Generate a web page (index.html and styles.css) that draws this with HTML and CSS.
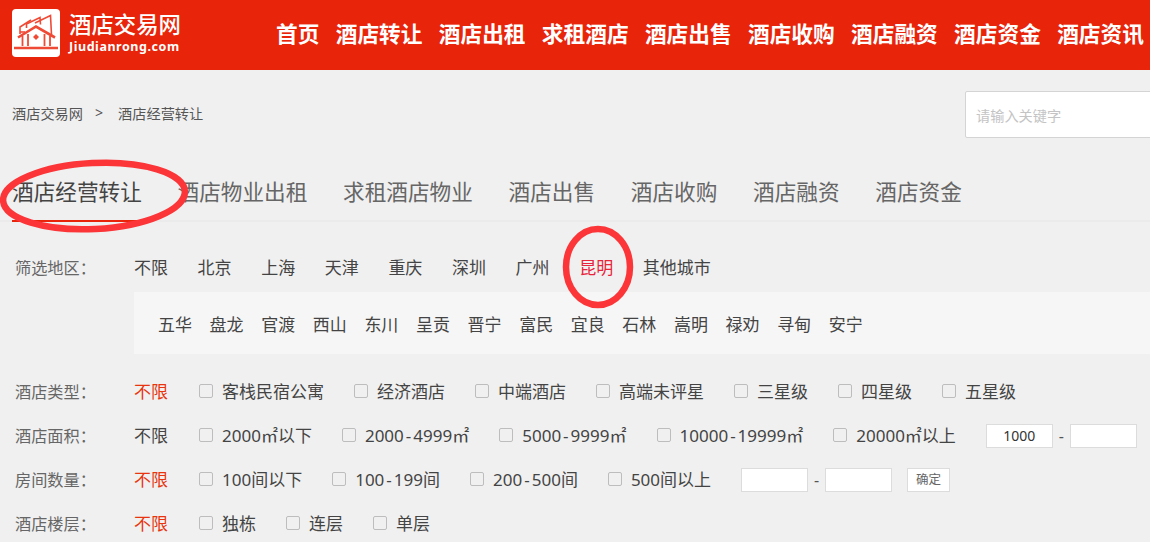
FILE: index.html
```html
<!DOCTYPE html>
<html lang="zh-CN">
<head>
<meta charset="utf-8">
<title>酒店交易网</title>
<link rel="stylesheet" href="styles.css">
</head>
<body>
<header class="topbar">
  <a class="logo">
    <svg class="logo-mark" viewBox="0 0 48 48" width="48" height="48">
      <rect width="48" height="48" rx="4" fill="#fff"/>
      <g fill="none" stroke="#ef4a35" stroke-width="1.6">
        <path d="M8 25 V18 L19 11"/>
        <path d="M14.5 19 V15 L28 8.5 L28.5 15.5"/>
        <path d="M23 14 L38.5 6.5 L39.5 26"/>
        <path d="M8 23 H13"/>
      </g>
      <path d="M6 28.5 L24 17.5 L43 28.5" fill="none" stroke="#ef4a35" stroke-width="2.6"/>
      <path d="M10.5 27 V37 M38 27 V37 M16 25 V37 M32.5 25 V37" stroke="#ef4a35" stroke-width="1.8"/>
      <path d="M21 28 L24 25 L27 28 L24 31 Z" fill="#ef4a35"/>
      <path d="M2 39 H46" stroke="#ef4a35" stroke-width="2.6"/>
    </svg>
    <span class="logo-text">
      <span class="logo-cn">酒店交易网</span>
      <span class="logo-en">Jiudianrong.com</span>
    </span>
  </a>
  <nav class="nav">
    <a>首页</a><a>酒店转让</a><a>酒店出租</a><a>求租酒店</a><a>酒店出售</a><a>酒店收购</a><a>酒店融资</a><a>酒店资金</a><a>酒店资讯</a>
  </nav>
</header>

<div class="crumbbar">
  <div class="crumbs"><span>酒店交易网</span><span class="sep">&gt;</span><span>酒店经营转让</span></div>
  <input class="search" type="text" placeholder="请输入关键字">
</div>

<div class="tabs">
  <a class="tab active">酒店经营转让</a><a class="tab">酒店物业出租</a><a class="tab">求租酒店物业</a><a class="tab">酒店出售</a><a class="tab">酒店收购</a><a class="tab">酒店融资</a><a class="tab">酒店资金</a>
</div>

<section class="filters">
  <div class="row">
    <span class="label">筛选地区：</span>
    <div class="cities">
      <a>不限</a><a>北京</a><a>上海</a><a>天津</a><a>重庆</a><a>深圳</a><a>广州</a><a class="on-city">昆明</a><a>其他城市</a>
    </div>
  </div>
  <div class="subpanel">
    <a>五华</a><a>盘龙</a><a>官渡</a><a>西山</a><a>东川</a><a>呈贡</a><a>晋宁</a><a>富民</a><a>宜良</a><a>石林</a><a>嵩明</a><a>禄劝</a><a>寻甸</a><a>安宁</a>
  </div>

  <div class="row">
    <span class="label">酒店类型：</span>
    <a class="any on">不限</a>
    <label class="opt"><i class="box"></i>客栈民宿公寓</label>
    <label class="opt"><i class="box"></i>经济酒店</label>
    <label class="opt"><i class="box"></i>中端酒店</label>
    <label class="opt"><i class="box"></i>高端未评星</label>
    <label class="opt"><i class="box"></i>三星级</label>
    <label class="opt"><i class="box"></i>四星级</label>
    <label class="opt"><i class="box"></i>五星级</label>
  </div>
  <div class="row">
    <span class="label">酒店面积：</span>
    <a class="any">不限</a>
    <label class="opt"><i class="box"></i>2000㎡以下</label>
    <label class="opt"><i class="box"></i>2000<span class="hy">-</span>4999㎡</label>
    <label class="opt"><i class="box"></i>5000<span class="hy">-</span>9999㎡</label>
    <label class="opt"><i class="box"></i>10000<span class="hy">-</span>19999㎡</label>
    <label class="opt"><i class="box"></i>20000㎡以上</label>
    <span class="range"><input class="num" type="text" value="1000"><span class="dash">-</span><input class="num" type="text"></span>
  </div>
  <div class="row">
    <span class="label">房间数量：</span>
    <a class="any on">不限</a>
    <label class="opt"><i class="box"></i>100间以下</label>
    <label class="opt"><i class="box"></i>100<span class="hy">-</span>199间</label>
    <label class="opt"><i class="box"></i>200<span class="hy">-</span>500间</label>
    <label class="opt"><i class="box"></i>500间以上</label>
    <span class="range"><input class="num" type="text"><span class="dash">-</span><input class="num" type="text"><button class="ok" type="button">确定</button></span>
  </div>
  <div class="row">
    <span class="label">酒店楼层：</span>
    <a class="any on">不限</a>
    <label class="opt"><i class="box"></i>独栋</label>
    <label class="opt"><i class="box"></i>连层</label>
    <label class="opt"><i class="box"></i>单层</label>
  </div>
</section>

<svg class="marks" width="1150" height="542" viewBox="0 0 1150 542">
  <ellipse cx="94" cy="196" rx="91" ry="33" transform="rotate(-3 94 196)"/>
  <ellipse cx="598" cy="267" rx="32" ry="38"/>
</svg>
</body>
</html>
```
FILE: styles.css
```css
* { box-sizing: border-box; }
html, body { margin: 0; padding: 0; overflow: hidden; height: 100%; }
body {
  position: relative;
  background: #f0f0f0;
  color: #444;
  font-family: "Noto Sans", "Noto Sans CJK SC", sans-serif;
  font-size: 17px;
}
.topbar {
  display: flex;
  align-items: center;
  height: 70px;
  padding-left: 12px;
  background: #e8240a;
  color: #fff;
}
.logo { display: flex; align-items: center; gap: 9px; width: 264px; margin-top: -4px; }
.logo-mark { flex: none; }
.logo-text { display: flex; flex-direction: column; }
.logo-cn { font-size: 22.4px; line-height: 27px; font-weight: 500; }
.logo-en { font-size: 12.5px; line-height: 17px; font-weight: 700; letter-spacing: 0.55px; }
.nav { display: flex; gap: 16.3px; font-size: 21.7px; font-weight: 700; white-space: nowrap; margin-top: -6px; }

.crumbbar {
  display: flex;
  justify-content: space-between;
  align-items: center;
  height: 47px;
  margin-top: 21px;
  margin-right: -40px;
  padding-left: 12px;
  font-size: 14.2px;
  color: #555;
}
.crumbs { display: flex; margin-top: -4px; }
.sep { margin: 0 15px 0 12px; }
.search {
  width: 225px;
  height: 47px;
  padding: 2px 10px 0;
  background: #fff;
  border: 1px solid #d4d4d4;
  border-radius: 2px;
  font: inherit;
  font-size: 14.2px;
}
.search::placeholder { color: #c4c4c4; opacity: 1; }

.tabs {
  display: flex;
  gap: 35.7px;
  height: 84px;
  padding: 32px 0 0 12px;
  border-bottom: 2px solid #ebebeb;
  font-size: 21.65px;
  line-height: 44px;
  color: #666;
  white-space: nowrap;
}
.tab { height: 52px; }
.tab.active { color: #444; border-bottom: 2px solid #e8240a; }

.filters { padding-top: 24px; white-space: nowrap; }
.row { display: flex; height: 44px; align-items: center; padding-left: 15px; line-height: 44px; }
.label { width: 119px; flex: none; font-size: 16.2px; color: #666; }
.cities { display: flex; gap: 29.6px; color: #444; }
.on-city { color: #e8243a; }
.subpanel {
  display: flex;
  gap: 17.6px;
  height: 62px;
  margin: 2px 0 16px 134px;
  padding-left: 24px;
  align-items: center;
  background: #f6f6f6;
  color: #444;
}
.any { width: 65px; flex: none; color: #444; }
.any.on { color: #e8350f; }
.opt { display: flex; align-items: center; margin-right: 30px; color: #444; }
.hy { padding: 0 2px; }
.box {
  flex: none;
  width: 14px;
  height: 14px;
  margin: -2px 9px 0 0;
  background: #f0f0f0;
  border: 1px solid #bdbdbd;
  border-radius: 2px;
}
.range { display: flex; align-items: center; }
.num {
  width: 67px;
  height: 24px;
  padding: 0;
  text-align: center;
  background: #fff;
  border: 1px solid #dcdcdc;
  font: inherit;
  font-size: 14px;
  color: #333;
}
.dash { width: 17px; text-align: center; font-size: 16px; color: #555; }
.ok {
  width: 43px;
  height: 24px;
  margin-left: 15px;
  padding: 0;
  background: #fff;
  border: 1px solid #dcdcdc;
  font-family: inherit;
  font-size: 12.5px;
  line-height: 22px;
  color: #666;
}
.marks { position: absolute; left: 0; top: 0; pointer-events: none; }
.marks ellipse { fill: none; stroke: #fb3538; stroke-width: 6.5; }
```
